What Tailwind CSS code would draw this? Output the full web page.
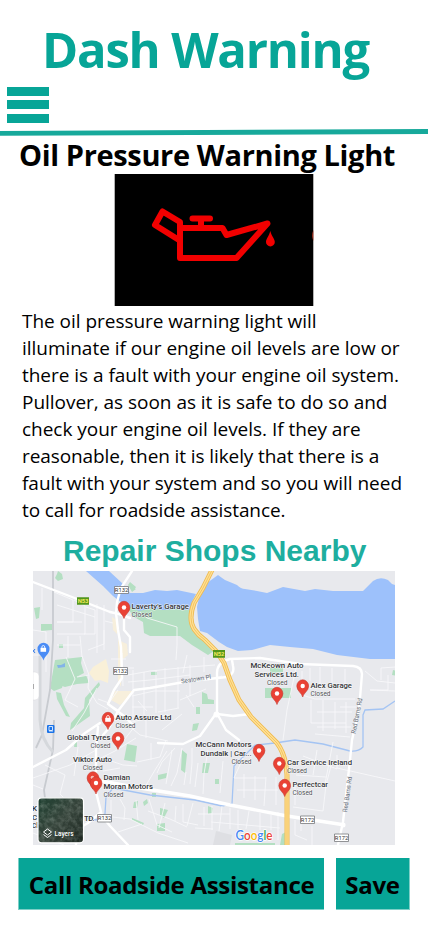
<!DOCTYPE html>
<html lang="en">
<head>
<meta charset="utf-8">
<meta name="viewport" content="width=device-width, initial-scale=1">
<title>Dash Warning</title>
<script src="https://cdn.jsdelivr.net/npm/@tailwindcss/browser@4"></script>
</head>
<body class="bg-white">
<main class="flex h-[926px] w-[428px] flex-col overflow-hidden bg-white font-['Open_Sans','Noto_Sans',sans-serif] text-black">
  <header class="flex h-[137px] shrink-0 flex-col">
    <h1 class="h-[87px] whitespace-nowrap pl-[42px] pt-[14px] text-[49px] font-bold leading-[70px] tracking-[-1.2px] text-[#07a597]">Dash Warning</h1>
    <button aria-label="Menu" class="ml-[7px] flex w-[42px] flex-col">
      <span class="h-[9px] w-full bg-[#07a597]"></span>
      <span class="mt-[4px] h-[9px] w-full bg-[#07a597]"></span>
      <span class="mt-[5px] h-[9px] w-full bg-[#07a597]"></span>
    </button>
    <svg class="mt-[5px] h-[9px] w-[428px]" viewBox="0 128 428 9"><path d="M0 133.4L428 131.5" stroke="#17a99b" stroke-width="4.8"/></svg>
  </header>

  <h2 class="h-[37px] shrink-0 whitespace-nowrap pl-[19px] text-[29px] font-bold leading-[35px] tracking-[-0.36px]">Oil Pressure Warning Light</h2>

  <svg class="ml-[114px] h-[132px] w-[200px] shrink-0" viewBox="114 174 200 132">
    <path d="M114.7 174H313.3V306H114.7Z"/>
    <g fill="none" stroke="#f20000" stroke-width="6" stroke-linejoin="round" stroke-linecap="round">
      <path d="M180 228H222.5L226.500 235L267.500 223.500L236.500 258H180V222L162.500 211.500L155 225L179 240"/>
      <path d="M192.500 218.500H210M201 219V227"/>
    </g>
    <path d="M270.300 231C269 236 266 239 266 242A4.300 4.300 0 0 0 274.800 242C274.800 239 271.500 236 270.300 231Z" fill="#f20000"/>
    <path d="M313.300 230Q311.300 235.500 313.300 241Z" fill="#c93a24"/>
  </svg>

  <p class="flex h-[226px] shrink-0 flex-col whitespace-nowrap pl-[22px] pt-[2px] text-[19px] leading-[27px] tracking-[-0.03px]">
    <span>The oil pressure warning light will</span>
    <span>illuminate if our engine oil levels are low or</span>
    <span>there is a fault with your engine oil system.</span>
    <span>Pullover, as soon as it is safe to do so and</span>
    <span>check your engine oil levels. If they are</span>
    <span class="tracking-[-0.1px]">reasonable, then it is likely that there is a</span>
    <span>fault with your system and so you will need</span>
    <span class="tracking-[-0.1px]">to call for roadside assistance.</span>
  </p>

  <h2 class="h-[39px] shrink-0 whitespace-nowrap pl-[63px] font-['Liberation_Sans',sans-serif] text-[30px] font-bold leading-[37px] text-[#1eae9f]">Repair Shops Nearby</h2>

  <svg class="ml-[33px] h-[274px] w-[362px] shrink-0" viewBox="33 571 362 274" font-family="Roboto, sans-serif">
    <defs>
      <g id="pin"><path d="M0 10.500C-.8 6.500-5.900 4.500-5.900-.4A5.900 6.300 0 0 1 5.900-.4C5.900 4.500.8 6.500 0 10.500Z" fill="#e94235" stroke="#c5362c" stroke-width=".6"/></g>
      <g id="bag" fill="none" stroke="#fff"><path d="M-2.800-1.200H2.800V2.800H-2.800Z" fill="#fff" stroke="none"/><path d="M-1.400-1V-2A1.400 1.500 0 0 1 1.400-2V-1" stroke-width=".8"/></g>
      <linearGradient id="sat" x1="0" y1="0" x2="1" y2="1"><stop offset="0" stop-color="#1f4031"/><stop offset=".5" stop-color="#36443b"/><stop offset="1" stop-color="#1b251f"/></linearGradient>
      <filter id="grain" x="0" y="0" width="1" height="1"><feTurbulence type="fractalNoise" baseFrequency=".22" numOctaves="3" seed="5"/><feColorMatrix values="0 0 0 0 .6 0 0 0 0 .68 0 0 0 0 .62 1.500 0 0 0 -.55"/><feComposite in2="SourceGraphic" operator="in"/></filter>
    </defs>
    <path d="M33 571H395V845H33Z" fill="#e8e9ed"/>
    <!-- parks -->
    <g fill="#b4dfc2">
      <path d="M58 571L62 574L63 579L58 581L55 578L57 574ZM126 606L150 607L180 609L192 609L192 622L200 636L217 649L208 655L192 645L180 636L150 636L144 633L143 622L134 617Z"/>
      <path d="M34 608L40 607L39 618L36 619ZM41 624L52 624V630L41 631ZM55 660L82 657L81 663L84 673L63 684L62 688L54 691L50 688ZM56 692L61 693L64 705L70 717L66 716L57 699ZM85 698L99 682L100 685L89 700L90 716L70 730L71 723L84 708Z"/>
      <path d="M202 692L207 694L208 699L214 700V704H202ZM196 707H200V714H196ZM193 724L199 723L197 730L192 731ZM265 688L291 688V698H265ZM270 668L283 668V672L270 673ZM127 744L137 746L135 762L124 760ZM75 740H77V747H74ZM182 750L187 754L185 773L181 770ZM203 763H210L208 773H202ZM215 779H219V784H215ZM158 775L167 773L166 778L158 780ZM160 808L168 810L164 818L160 815ZM208 806L213 808L212 813L208 814ZM157 824L165 823V831H157ZM134 802L138 801L137 808L133 808ZM143 802L147 799L148 803L144 806ZM282 834L286 832V845H280ZM235 843H275V845H235ZM393 670L398 671V676L392 675ZM132 818L144 823L143 825L132 820ZM151 672H157V675H151ZM128 585L136 589L132 592ZM59 644H63V648H59ZM130 582L136 587L134 590L128 585ZM152 793H156V797H152Z"/>
      <path d="M89 683L77 684L65 687L59 685L66 679L86 675Z"/>
    </g>
    <path d="M57 665L61 665L65 663L65 667L58 668Z" fill="#83b4e8"/>
    <!-- commercial blocks -->
    <g fill="#f9f0d8">
      <path d="M93 667L106 659L109 671L108 683L100 680L95 681L89 673Z"/>
      <path d="M112 617L117 620V634L113 630ZM118 640L127 644L128 655L122 660L121 687L118 680ZM115 691L134 691L128 698L120 705L111 700Z" opacity=".85"/>
    </g>
    <path d="M216 831L232 835L230 845H213Z" fill="#dedfe3"/>
    <!-- water -->
    <g fill="#9dc1fb">
      <path d="M86 571H109L122 583L130 593L143 593L155 590L167 591L177 590L196 594L192 602L190 610L176 609L163 610L152 608L139 611L126 605L118 600L113 596L103 586Z"/>
      <path d="M200 593L207 583L218 575Q222 578 225 580L237 585Q241 589 245 589L257 591L267 593L283 587L305 591L315 589L333 591H363L373 581Q380 576 388 580L392 584L395 585V659L370 659L337 655L313 649L290 647L270 645L252 650L238 651L227 647L219 642L207 633L200 631L198 619L197 607Z"/>
    </g>
    <path d="M395 701L383 709L365 710L363 715V747Q358 752 350 751L323 744L295 740L275 743L255 745L240 760L234 766L232 804L222 806L195 800L150 795L113 788L106 797L105 814L96 820L88 818" fill="none" stroke="#a4c4f3" stroke-width="1.300"/>
    <!-- railway -->
    <path d="M53 571L53 640L50 690L42 735L36 748M54 720L53 750L44 790L45 798" fill="none" stroke="#c8cbd0" stroke-width="1.800"/>
    <path d="M40 650V720Q41 740 53 752" fill="none" stroke="#d5d8dc" stroke-width="3"/>
    <!-- minor streets -->
    <g fill="none" stroke="#f8f8fa" stroke-width=".85">
      <path d="M42 588V610M54 592L73 600L73 622H57M57 605L95 617M74 600L85 606V634H57M86 607L95 610V634H84M97 604V653M104 605V650M57 622H82M33 630L46 632V672M33 655H47M68 636V657M80 636L82 657M57 645H80M88 650L104 644V630M105 621L113 623M118 586L123 588M140 612L147 618L177 627V645L176 660"/>
      <path d="M82 656L89 675L88 688L97 703L108 709M66 657L75 679L65 700L78 707M89 675L77 677M97 688L84 713L72 731M118 690L109 703L98 699M122 653L123 686M111 659H126M120 668H134M128 675L150 671L190 667L215 665M128 682L150 680L190 675M133 670V720M144 672V715M156 670V713M165 668V712M178 667V708M190 665V696M132 696L154 691H180M132 707H153M158 712L179 708M186 695L194 707M137 719L168 715M146 720V738M162 730L182 714M180 700L206 689M138 701L147 711M187 655L183 673M204 657V672M208 680L222 676"/>
      <path d="M296 668L287 710L283 740M302 671V682M310 668V681M320 667V685M332 668V686M345 669V688M302 695L315 699H355M311 700V723H346M323 700V731M335 702V729M346 702V733M317 712H352M317 727H351M315 734L350 737M365 671L377 681L395 683M381 680V668L395 667M370 690H388V675M356 707H340M395 691L370 690"/>
      <path d="M96 750L70 765L33 778M45 765L65 775L60 794L71 805M78 747L74 776M97 760L115 751L136 738M116 728L127 723L150 718M121 744L135 726M127 724L140 735L168 741M105 759L123 765L137 766M103 771L120 768M137 762L160 757L166 740M151 743V760M167 751L155 770L145 787M172 750L166 784M182 748L177 773L171 786M186 772L184 785M192 748V763L190 784M198 763L195 787M208 750L204 774L203 794M223 761L220 793M243 758L234 778H266M244 774V798M255 776V800M266 777L264 806M276 777V805M237 790H278M281 780L295 787V805M293 807L323 811L326 785L331 766M303 756L337 769V755M296 775L326 777M317 750L313 775M337 768L395 781M333 742L325 784M157 773L162 762L175 748"/>
      <path d="M111 800V820M120 799L125 808L124 820M136 800L138 820M149 799L157 825L172 832M103 816L130 819L158 833L188 843M118 832L142 824M165 803L159 828M176 806L175 821M183 804V822L198 825M193 803L187 826M204 807V826M212 806V830M222 806L219 831M230 808V829M238 810V829M249 811L246 829M260 813V830M271 815V830M198 814H230M195 828L213 829M211 822L280 828M278 812V840M295 820V835L307 840M301 821V831M312 826V845M148 811L170 819L187 827M33 833L64 845M33 785L43 789"/>
    </g>
    <!-- main streets -->
    <g fill="none" stroke="#fff" stroke-width="2.400" stroke-linejoin="round" stroke-linecap="round">
      <path d="M33 582L72 597L110 612M132 571L121 588L117 602L116 613L118 630L121 647L122 678L114 690L108 704L118 711L134 690L150 688L190 681M118 711L109 728L103 735M108 704L124 716L132 724M110 612L119 614L130 618"/>
      <path d="M190 681L227 677Q235 674 233 666L232 660M217 685V673Q217 662 230 659L260 658L300 664L353 666Q362 667 362 674L359 710L352 740L350 760L343 822L338 845M217 685V714L233 716L250 714M215 715L200 736L183 744L158 743M219 717L226 730L239 740"/>
      <path d="M124 613V630L130 637V652M100 723L85 733L66 750L33 767M98 727L96 750L96 792L102 816L110 826L128 845M76 845V830L88 823L100 813"/>
    </g>
    <path d="M101 781L140 788L190 796L230 805L287 816L345 825" fill="none" stroke="#fff" stroke-width="3.400"/>
    <circle cx="343" cy="825" r="2.500" fill="#fff"/><circle cx="216.500" cy="714.500" r="3" fill="#fff"/>
    <!-- trunk road -->
    <path d="M212 570L203 588L194 603Q188 619 194 629Q198 635 205 640L217 652L224 663L230 680L239 700L251 717L277 743Q286 755 287 775V846" fill="none" stroke="#efbb52" stroke-width="5"/>
    <path d="M212 570L203 588L194 603Q188 619 194 629Q198 635 205 640L217 652L224 663L230 680L239 700L251 717L277 743Q286 755 287 775V846" fill="none" stroke="#ffe094" stroke-width="3.200"/>
    <path d="M212 570L203 588L194 603Q188 619 194 629Q198 635 205 640L217 652L224 663L230 680L239 700L251 717L277 743Q286 755 287 775V846" fill="none" stroke="#f0be55" stroke-width=".8"/>
    <!-- road shields -->
    <g font-size="5.800" text-anchor="middle" fill="#333">
      <path d="M114.500 586.500H128.500V593.500H114.500ZM113.500 667.500H127.500V674.500H113.500ZM97.500 814.500H111.500V822H97.500ZM300.500 816H314.500V823.500H300.500ZM334.500 834H348.500V841.500H334.500Z" fill="#fff" stroke="#77797c" stroke-width=".8"/>
      <text x="121.500" y="592.200">R132</text><text x="120.500" y="673.200">R132</text><text x="104.500" y="820.400">R132</text><text x="307.500" y="821.900">R172</text><text x="341.500" y="839.900">R172</text>
      <path d="M77 597.300H89V604.800H77ZM213 650H225V657.800H213Z" fill="#52961c"/>
      <text x="83" y="603" fill="#f2e85c" font-weight="700">N53</text><text x="219" y="656" fill="#f2e85c" font-weight="700">N52</text>
    </g>
    <g font-size="6.400" fill="#606873">
      <text transform="translate(181.500 683.500) rotate(-9)" textLength="30" lengthAdjust="spacingAndGlyphs">Seatown Pl</text>
      <text transform="translate(355.500 734) rotate(-79)" textLength="36" lengthAdjust="spacingAndGlyphs">Red Barns Rd</text>
      <text transform="translate(347 812.500) rotate(-82)" textLength="36" lengthAdjust="spacingAndGlyphs">Red Barns Rd</text>
    </g>
    <!-- partially covered side controls -->
    <path d="M33 672H35Q39 672 39 676V696Q39 700 35 700H33Z" fill="#fff" stroke="#d8d9dc" stroke-width=".5"/>
    <path d="M33 684V689" stroke="#777" stroke-width="1.200"/>
    <rect x="47" y="725" width="7.500" height="8" rx="1" fill="#1a73e8"/><path d="M49 726.500H52.500V730.500H49ZM49.500 732L51 730.500L52.500 732" fill="none" stroke="#fff" stroke-width=".8"/>
    <path d="M32 649L35 653M35 649L32 653" stroke="#3478e5"/>
    <path d="M43.500 660.500C42.500 656 37.500 654 37.500 649A6 6.300 0 0 1 49.500 649C49.500 654 44.500 656 43.500 660.500Z" fill="#4a8cf5"/><use href="#bag" x="43.300" y="649"/>
    <!-- place labels -->
    <g font-size="8" font-weight="500" fill="#333538" stroke="#fff" stroke-width="1.200" stroke-opacity=".75" paint-order="stroke" stroke-linejoin="round">
      <text x="131.500" y="609.300" textLength="57.500" lengthAdjust="spacingAndGlyphs">Laverty's Garage</text>
      <text x="250.500" y="668" textLength="53" lengthAdjust="spacingAndGlyphs">McKeown Auto</text>
      <text x="254.500" y="677" textLength="44.500" lengthAdjust="spacingAndGlyphs">Services Ltd.</text>
      <text x="310.500" y="687.700" textLength="41.500" lengthAdjust="spacingAndGlyphs">Alex Garage</text>
      <text x="115.500" y="720.300" textLength="56" lengthAdjust="spacingAndGlyphs">Auto Assure Ltd</text>
      <text x="67" y="740" textLength="43.500" lengthAdjust="spacingAndGlyphs">Global Tyres</text>
      <text x="73" y="762" textLength="39" lengthAdjust="spacingAndGlyphs">Viktor Auto</text>
      <text x="103.500" y="780" textLength="26.500" lengthAdjust="spacingAndGlyphs">Damian</text>
      <text x="103.500" y="789" textLength="49.500" lengthAdjust="spacingAndGlyphs">Moran Motors</text>
      <text x="195.500" y="747" textLength="56" lengthAdjust="spacingAndGlyphs">McCann Motors</text>
      <text x="200.500" y="755.700" textLength="51" lengthAdjust="spacingAndGlyphs">Dundalk | Car...</text>
      <text x="287" y="765" textLength="65" lengthAdjust="spacingAndGlyphs">Car Service Ireland</text>
      <text x="292.500" y="787" textLength="35.500" lengthAdjust="spacingAndGlyphs">Perfectcar</text>
      <text x="84" y="820.500" textLength="10.500">TD.</text>
      <text x="32" y="811">K</text><text x="32" y="820">C</text><text x="32" y="828" font-size="6.500">Cl</text>
    </g>
    <g font-size="6.800" fill="#4d4f53" stroke="#fff" stroke-width="1" stroke-opacity=".7" paint-order="stroke">
      <text x="131.500" y="617" textLength="20.500" lengthAdjust="spacingAndGlyphs">Closed</text><text x="267" y="685" textLength="20.500" lengthAdjust="spacingAndGlyphs">Closed</text>
      <text x="310.500" y="695.700" textLength="20" lengthAdjust="spacingAndGlyphs">Closed</text><text x="115.500" y="728" textLength="20" lengthAdjust="spacingAndGlyphs">Closed</text>
      <text x="90.500" y="747.500" textLength="20" lengthAdjust="spacingAndGlyphs">Closed</text><text x="82.800" y="770" textLength="20" lengthAdjust="spacingAndGlyphs">Closed</text>
      <text x="103.500" y="797" textLength="20" lengthAdjust="spacingAndGlyphs">Closed</text><text x="231.500" y="764" textLength="20" lengthAdjust="spacingAndGlyphs">Closed</text>
      <text x="287" y="773" textLength="20" lengthAdjust="spacingAndGlyphs">Closed</text><text x="292.500" y="795" textLength="20" lengthAdjust="spacingAndGlyphs">Closed</text>
    </g>
    <!-- pins -->
    <use href="#pin" x="124" y="608"/><use href="#pin" x="277" y="694"/><use href="#pin" x="302.700" y="686.500"/><use href="#pin" x="108" y="719"/><use href="#pin" x="118" y="739"/><use href="#pin" x="93" y="778.500"/><circle cx="92.500" cy="777.500" r="1.800" fill="#f6c0bb"/><use href="#pin" x="96" y="783.500"/><use href="#pin" x="259" y="751"/><use href="#pin" x="279.300" y="764"/><use href="#pin" x="284.700" y="786"/>
    <g fill="#fff"><circle cx="124" cy="607.500" r="2.200"/><circle cx="277" cy="693.500" r="2.200"/><circle cx="302.700" cy="686" r="2.200"/><circle cx="118" cy="738.500" r="2.200"/><circle cx="96" cy="783" r="2.200"/><circle cx="259" cy="750.500" r="2.200"/><circle cx="279.300" cy="763.500" r="2.200"/><circle cx="284.700" cy="785.500" r="2.200"/></g>
    <use href="#bag" x="108" y="719"/>
    <!-- layers control -->
    <rect x="38" y="797.800" width="45.500" height="45" rx="3.500" fill="url(#sat)"/>
    <rect x="38" y="797.800" width="45.500" height="45" rx="3.500" filter="url(#grain)" opacity=".35"/>
    <rect x="38" y="797.800" width="45.500" height="45" rx="3.500" fill="none" stroke="#fff" stroke-width="1.200"/>
    <path d="M47.500 829L51.500 832L47.500 835L43.500 832ZM43.500 834.500L47.500 837.500L51.500 834.500" fill="none" stroke="#fff"/>
    <text x="54.500" y="836.300" font-size="6.600" font-weight="500" fill="#fff" textLength="19" lengthAdjust="spacingAndGlyphs">Layers</text>
    <text x="235.500" y="840.300" font-family="Lato, sans-serif" font-size="12.500" font-weight="600" textLength="37" lengthAdjust="spacingAndGlyphs" stroke="#fff" stroke-width="1.500" paint-order="stroke"><tspan fill="#4285f4">G</tspan><tspan fill="#ea4335">o</tspan><tspan fill="#fbbc05">o</tspan><tspan fill="#4285f4">g</tspan><tspan fill="#34a853">l</tspan><tspan fill="#ea4335">e</tspan></text>
  </svg>

  <footer class="flex gap-[12px] pl-[18px] pt-[13px] text-[24px] font-bold tracking-[-0.3px]">
    <button class="h-[52px] w-[306px] whitespace-nowrap border-b border-l border-[#7dcfc7] bg-[#07a597] pt-[2px] leading-[49px]">Call Roadside Assistance</button>
    <button class="h-[52px] w-[74px] whitespace-nowrap border-b border-r border-[#7dcfc7] bg-[#07a597] pt-[2px] leading-[49px]">Save</button>
  </footer>
</main>
</body>
</html>
